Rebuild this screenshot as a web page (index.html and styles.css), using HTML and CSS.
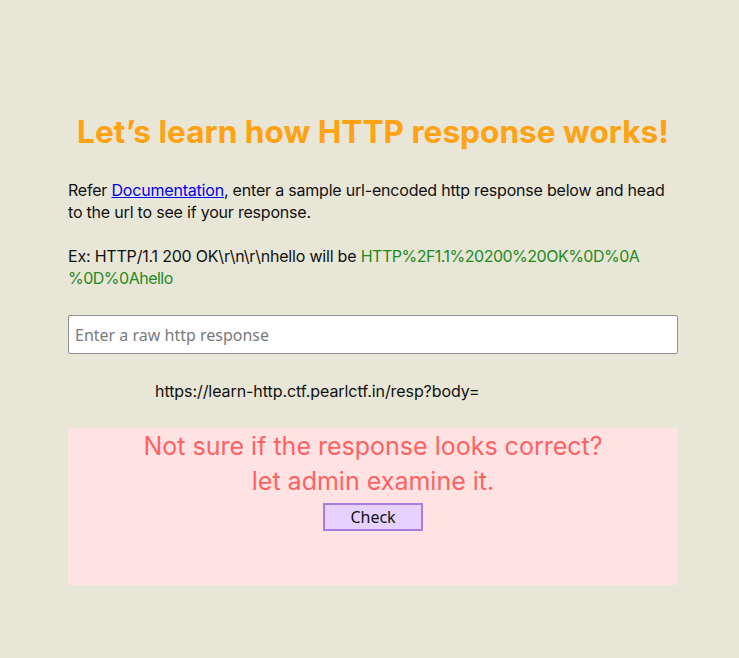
FILE: index.html
```html
<!DOCTYPE html>
<html>
<head>
<meta charset="utf-8">
<link rel="stylesheet" href="styles.css">
</head>
<body>
<main class="wrap">
  <h1 class="title">Let’s learn how HTTP response works!</h1>
  <p class="text">Refer <a href="#" class="link">Documentation</a>, enter a sample url-encoded http response below and head to the url to see if your response.</p>
  <p class="text">Ex: HTTP/1.1 200 OK\r\n\r\nhello will be <span class="enc">HTTP%2F1.1%20200%20OK%0D%0A<wbr>%0D%0Ahello</span></p>
  <input class="field" type="text" placeholder="Enter a raw http response">
  <div class="url">https://learn-http.ctf.pearlctf.in/resp?body=</div>
  <section class="admin">
    <div class="admin-msg">Not sure if the response looks correct?</div>
    <div class="admin-msg">let admin examine it.</div>
    <button class="check">Check</button>
  </section>
</main>
</body>
</html>
```
FILE: styles.css
```css
html, body {
  margin: 0;
  padding: 0;
  background: #e8e6d6;
}
body {
  font-family: Inter, "Noto Sans", sans-serif;
  color: #111;
}
.wrap {
  width: 610px;
  margin-left: 68px;
  padding-top: 113px;
  padding-bottom: 73px;
}
.title {
  margin: 0 0 28px;
  text-align: center;
  font-size: 31.6px;
  line-height: 38px;
  font-weight: 700;
  color: #ffa214;
}
.text {
  margin: 0 0 22px;
  font-size: 16px;
  line-height: 22px;
  letter-spacing: -0.2px;
}
.link {
  color: #0000ee;
}
.enc {
  color: #1f8a1f;
  letter-spacing: -0.5px;
}
.field {
  display: block;
  box-sizing: border-box;
  width: 610px;
  height: 39px;
  margin: 26px 0 0;
  padding: 0 6px;
  border: 1px solid #8f8f8f;
  border-radius: 2px;
  background: #fff;
  font-family: "Noto Sans", sans-serif;
  font-size: 16px;
}
.field::placeholder {
  color: #7a7a7a;
}
.url {
  padding: 26px 0 0 87px;
  font-size: 16px;
  line-height: 22px;
  letter-spacing: -0.07px;
  height: 48px;
}
.admin {
  display: flex;
  flex-direction: column;
  align-items: center;
  height: 157px;
  box-sizing: border-box;
  padding-top: 1px;
  background: #ffe3e3;
}
.admin-msg {
  font-size: 25px;
  line-height: 35px;
  color: #ff6262;
}
.check {
  margin-top: 4px;
  width: 100px;
  height: 28px;
  border: 2px solid #a97de0;
  background: #e7d1ff;
  font-family: "Noto Sans", sans-serif;
  font-size: 16px;
  color: #111;
  padding: 0;
}
```
